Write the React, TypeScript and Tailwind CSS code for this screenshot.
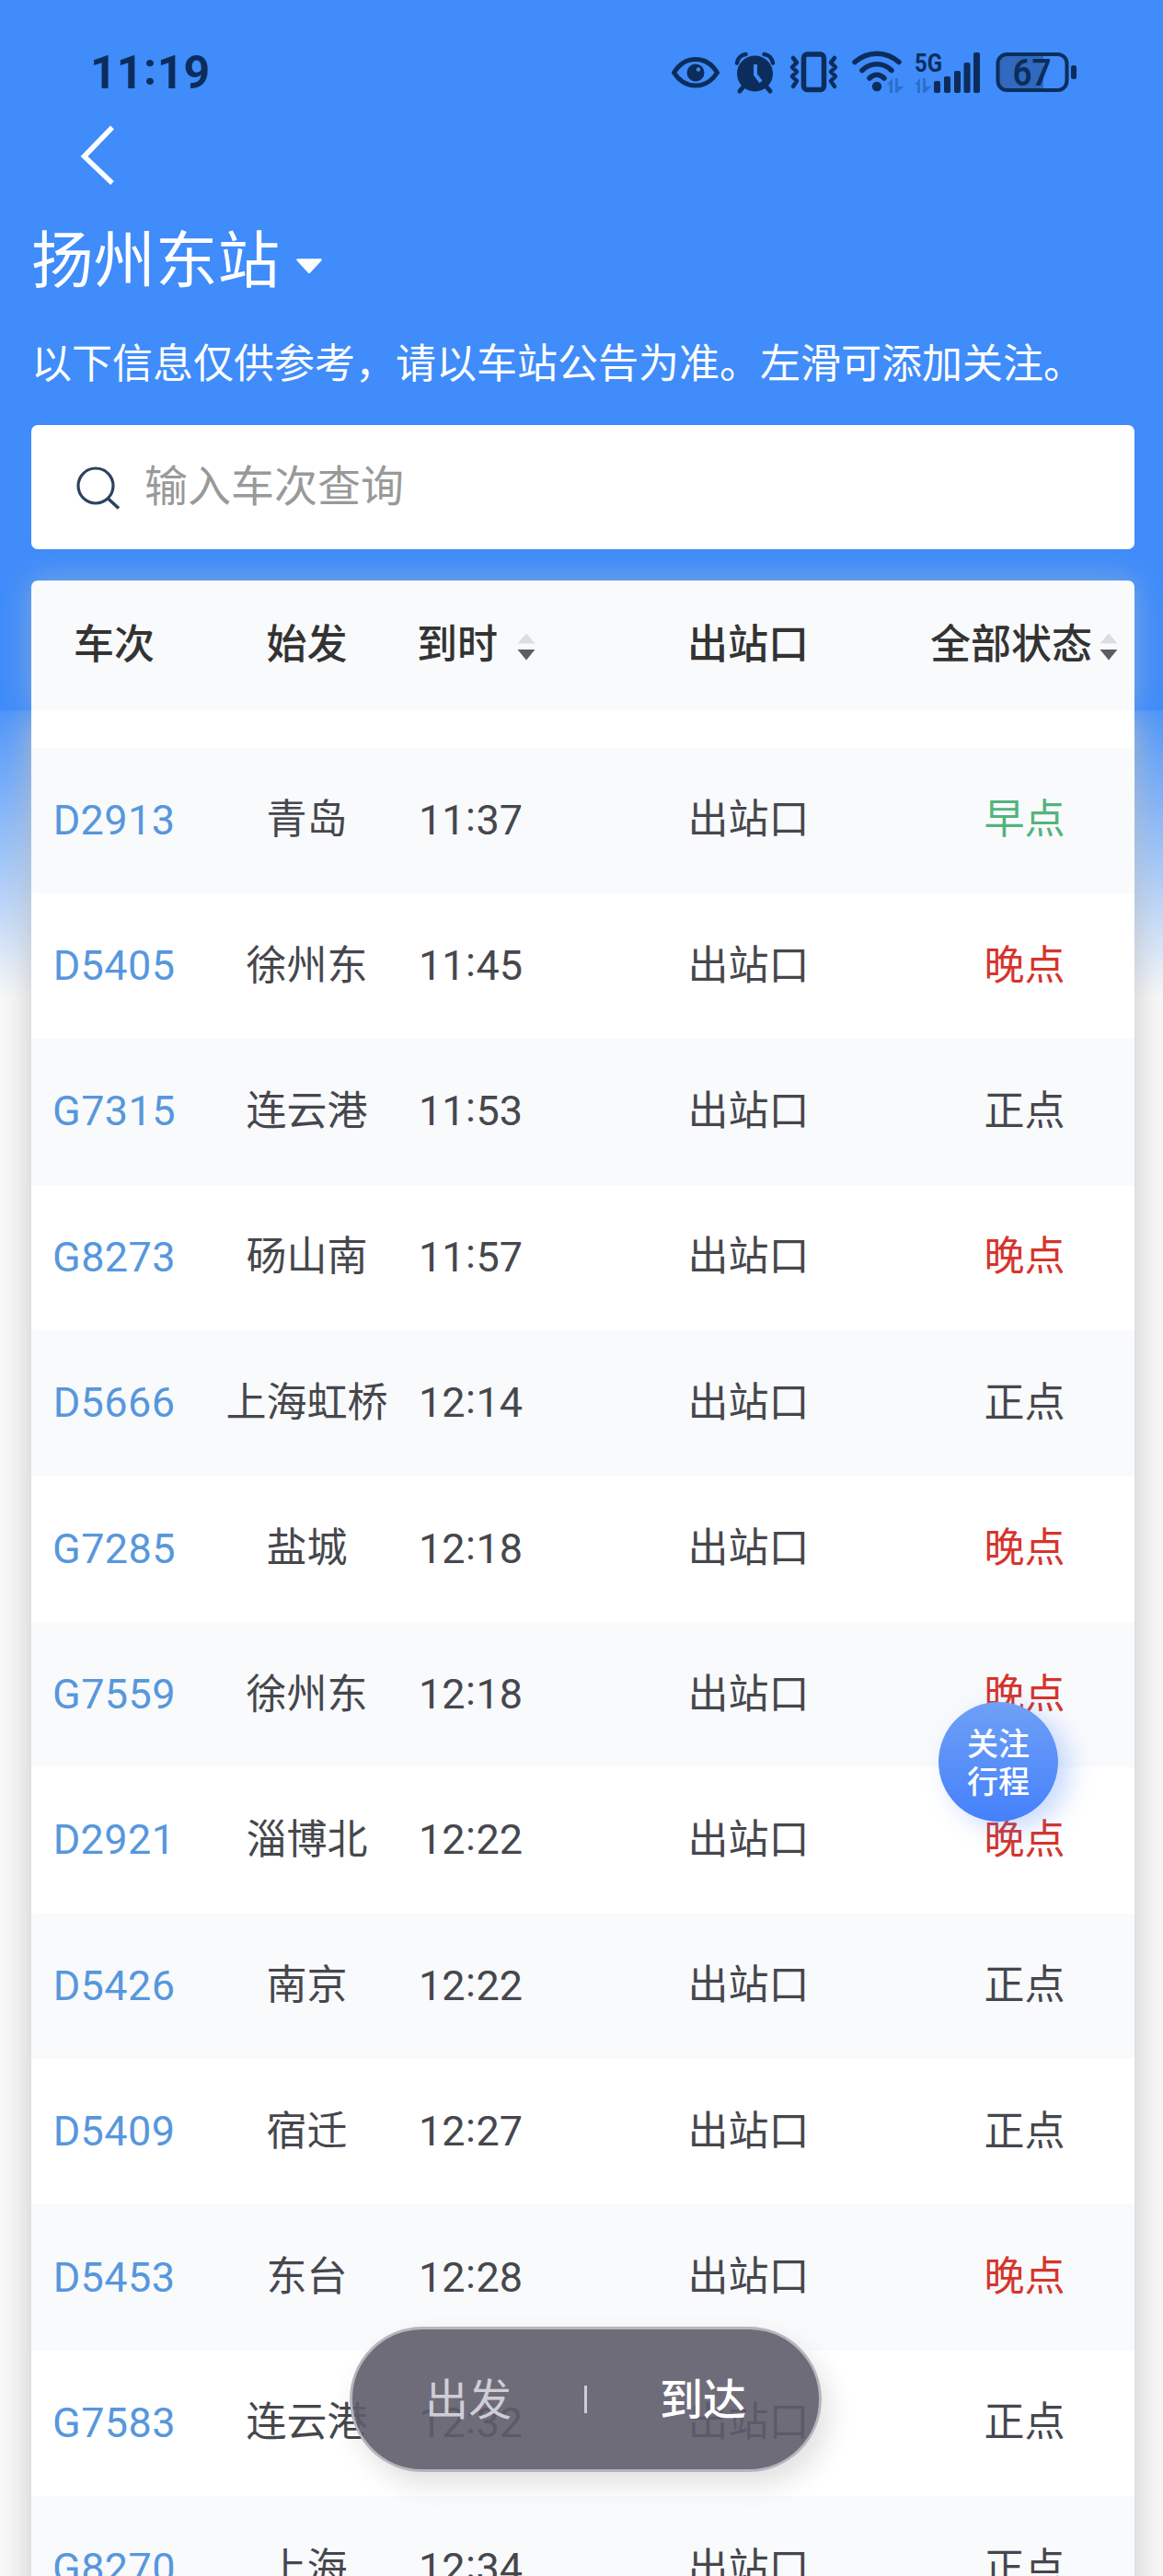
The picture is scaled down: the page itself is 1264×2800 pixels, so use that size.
import React from "react";

const FONT = 'font-[Roboto,"Noto_Sans_CJK_SC",sans-serif]';

type Status = "早点" | "晚点" | "正点";

const STATUS_COLOR: Record<Status, string> = {
  早点: "text-[#52b47c]",
  晚点: "text-[#d6342b]",
  正点: "text-[#46474d]",
};

const TRAINS: [string, string, string, Status][] = [
  ["D2913", "青岛", "11:37", "早点"],
  ["D5405", "徐州东", "11:45", "晚点"],
  ["G7315", "连云港", "11:53", "正点"],
  ["G8273", "砀山南", "11:57", "晚点"],
  ["D5666", "上海虹桥", "12:14", "正点"],
  ["G7285", "盐城", "12:18", "晚点"],
  ["G7559", "徐州东", "12:18", "晚点"],
  ["D2921", "淄博北", "12:22", "晚点"],
  ["D5426", "南京", "12:22", "正点"],
  ["D5409", "宿迁", "12:27", "正点"],
  ["D5453", "东台", "12:28", "晚点"],
  ["G7583", "连云港", "12:32", "正点"],
  ["G8270", "上海", "12:34", "正点"],
];

function Time({ value }: { value: string }) {
  const [h, m] = value.split(":");
  return (
    <span className="whitespace-nowrap">
      {h}
      <span className="relative -top-[4px] mx-[0.5px]">:</span>
      {m}
    </span>
  );
}

function SortArrows() {
  return (
    <svg className="mt-[3px] h-[30px] w-[20px] shrink-0" viewBox="0 0 20 30">
      <path d="M10 0.5 19.5 11.5H0.5Z" fill="#dcdddf" />
      <path d="M0.5 18H19.5L10 29.5Z" fill="#5c5d60" />
    </svg>
  );
}

function StatusIcons() {
  const c = "#0c2d5c";
  return (
    <svg className="h-[50px] w-[450px]" viewBox="0 0 450 50">
      {/* eye */}
      <path d="M2.500 25C8 16 16 10.500 26 10.500s18 5.500 23.500 14.500C44 33.500 36 39 26 39S8 33.500 2.500 25Z" fill="none" stroke={c} strokeWidth="5" strokeLinejoin="round" />
      <circle cx="26" cy="25" r="9.500" fill={c} />
      <circle cx="29" cy="21.500" r="2.200" fill="#3f8cfa" />
      {/* alarm clock */}
      <circle cx="90.500" cy="26" r="19.500" fill={c} />
      <path d="M71 14.500a11 11 0 0 1 9.500-9.500M110 14.500a11 11 0 0 0-9.500-9.500" fill="none" stroke={c} strokeWidth="4.500" strokeLinecap="round" />
      <path d="M79 39l-5 6M102 39l5 6" stroke={c} strokeWidth="5" strokeLinecap="round" />
      <path d="M91 16v11l6 8" fill="none" stroke="#3f8cfa" strokeWidth="4" />
      {/* vibrate */}
      <rect x="143.500" y="5" width="22" height="38.500" rx="4" fill="none" stroke={c} strokeWidth="5.500" />
      <path d="M132 9l4 5-5 5 5 5-5 5 5 5-4 6M177 9l-4 5 5 5-5 5 5 5-5 5 4 6" fill="none" stroke={c} strokeWidth="4.500" strokeLinecap="round" strokeLinejoin="round" />
      {/* wifi */}
      <path d="M199 13.500C213 1 233 1 247 13.500" fill="none" stroke={c} strokeWidth="5.500" strokeLinecap="round" />
      <path d="M207 22.500c9-9 23-9 32 0M215 31c5-5 11-5 16 0" fill="none" stroke={c} strokeWidth="5.500" strokeLinecap="round" />
      <circle cx="223" cy="40" r="5.200" fill={c} />
      <g fill="#2e6fcd">
        <path d="M234 38l6-7v16h-3v-9zM243 31h3v9h6l-7 7h-2z" />
        <path d="M264 38l6-7v16h-3v-9zM273 31h3v9h6l-7 7h-2z" />
      </g>
      {/* signal */}
      <text x="264" y="23.500" fontSize="28" fontWeight="700" fill={c} textLength="30" lengthAdjust="spacingAndGlyphs" fontFamily="Roboto, sans-serif">5G</text>
      <g fill={c}>
        <rect x="285" y="34" width="7" height="13" rx="2" />
        <rect x="296" y="29" width="7" height="18" rx="2" />
        <rect x="307" y="23" width="7" height="24" rx="2" />
        <rect x="317.500" y="14" width="7" height="33" rx="2" />
        <rect x="328" y="3" width="7" height="44" rx="2" />
      </g>
      {/* battery */}
      <path d="M363 5H404V44H363a9 9 0 0 1-9-9V14a9 9 0 0 1 9-9Z" fill="#3069bd" />
      <rect x="354.500" y="5" width="75" height="39" rx="10" fill="none" stroke={c} strokeWidth="4" />
      <rect x="434" y="17" width="6" height="15" rx="2.500" fill={c} />
      <text x="391.500" y="39" fontSize="40" fontWeight="600" fill={c} textAnchor="middle" textLength="42" lengthAdjust="spacingAndGlyphs" fontFamily="Roboto, sans-serif">67</text>
    </svg>
  );
}

export default function App() {
  return (
    <div className={`relative flex h-[2800px] w-[1264px] flex-col overflow-hidden bg-[linear-gradient(to_bottom,#3f8cfa_0,#3f8cfa_772px,#4d95fa_773px,#a9cbfa_950px,#f9f9f9_1085px)] ${FONT} text-[44px] leading-none text-[#46474d]`}>
      <div className="relative z-10 flex h-[631px] shrink-0 flex-col pl-[34px] pr-[31px]">
        <div className="flex h-[116px] shrink-0 items-start justify-between pt-[54px]">
          <div className="pl-[64px] text-[50px] font-bold tracking-[0.1px] text-[#0c2d5c]">
            <Time value="11:19" />
          </div>
          <div className="mr-[53px]">
            <StatusIcons />
          </div>
        </div>
        <svg className="ml-[52px] mt-[20px] h-[66px] w-[38px] shrink-0" viewBox="0 0 38 66">
          <path d="M36 2.500 5.500 34 36 63" fill="none" stroke="white" strokeWidth="5.500" />
        </svg>
        <div className="mt-[42px] flex h-[80px] shrink-0 items-center text-[67.500px] text-white">
          扬州东站
          <svg className="ml-[17px] mt-[10px] h-[17px] w-[30px]" viewBox="0 0 30 17">
            <path d="M2.500 1.500H27.500L15 15Z" fill="white" stroke="white" strokeWidth="2.500" strokeLinejoin="round" />
          </svg>
        </div>
        <p className="mt-[50px] h-[44px] shrink-0 whitespace-nowrap text-[44px] text-white">
          以下信息仅供参考，请以车站公告为准。左滑可添加关注。
        </p>
        <div className="mt-[44px] flex h-[135px] shrink-0 items-center rounded-[7px] bg-white pl-[49px]">
          <svg className="h-[48px] w-[49px]" viewBox="0 0 49 48">
            <circle cx="21" cy="22" r="19" fill="none" stroke="#2c4260" strokeWidth="3.200" />
            <path d="M34.500 36 46 46.500" stroke="#2c4260" strokeWidth="3.600" />
          </svg>
          <span className="-mt-[2px] ml-[25px] text-[47px] text-[#999]">输入车次查询</span>
        </div>
      </div>

      <div className="mx-[34px] w-[1199px] shrink-0">
        <div className="relative grid h-[141px] grid-cols-[180px_238px_241px_240px_1fr] items-center rounded-t-[7px] bg-[#f9fafc] pb-[1px] font-medium text-[#333] shadow-[0_0_34px_rgba(200,200,200,0.5)] [clip-path:inset(-34px_-34px_0_-34px)]">
          <span className="text-center">车次</span>
          <span className="pl-[1px] text-center">始发</span>
          <span className="flex items-center gap-[21px] pl-[1px]">
            到时
            <SortArrows />
          </span>
          <span className="text-center">出站口</span>
          <span className="flex items-center gap-[8px] pl-[78px]">
            全部状态
            <SortArrows />
          </span>
        </div>
        <div className="bg-white pt-[40.500px] shadow-[0_0_34px_rgba(190,190,190,0.85)] [clip-path:inset(0_-34px_0_-34px)]">
          {TRAINS.map(([no, from, time, status], i) => (
            <div
              key={no}
              className={`grid h-[158.400px] grid-cols-[180px_238px_241px_240px_1fr] items-center pb-[1px] ${i % 2 === 0 ? "bg-[#f9fafc]" : "bg-white"}`}
            >
              <span className="text-center text-[45px] tracking-[0.4px] text-[#5797dc]">{no}</span>
              <span className="whitespace-nowrap pl-[1px] text-center">{from}</span>
              <span className="pl-[3px] text-[45px]">
                <Time value={time} />
              </span>
              <span className="pl-[1px] text-center">出站口</span>
              <span className={`pl-[61px] text-center ${STATUS_COLOR[status]}`}>{status}</span>
            </div>
          ))}
        </div>
      </div>

      <div className="absolute left-[1020px] top-[1850px] z-20 flex h-[130px] w-[130px] flex-col items-center justify-center rounded-full bg-linear-to-b from-[#6fa0f6] to-[#4480fb] pt-[3px] text-[34px] font-medium leading-[41px] text-white shadow-[12px_8px_28px_rgba(68,128,251,0.3)]">
        <span>关注</span>
        <span>行程</span>
      </div>

      <div className="absolute left-[380px] top-[2529px] z-20 flex h-[158px] w-[513px] items-center justify-center rounded-full border-[3px] border-[#b6b5bd] bg-[#5f5c6c]/90 text-[47px] text-white shadow-[8px_14px_30px_rgba(0,0,0,0.12)]">
        <span className="flex-1 text-center text-[#cfced6]">出发</span>
        <span className="h-[30px] w-[3px] bg-[#cfced6]" />
        <span className="flex-1 text-center font-medium">到达</span>
      </div>
    </div>
  );
}
